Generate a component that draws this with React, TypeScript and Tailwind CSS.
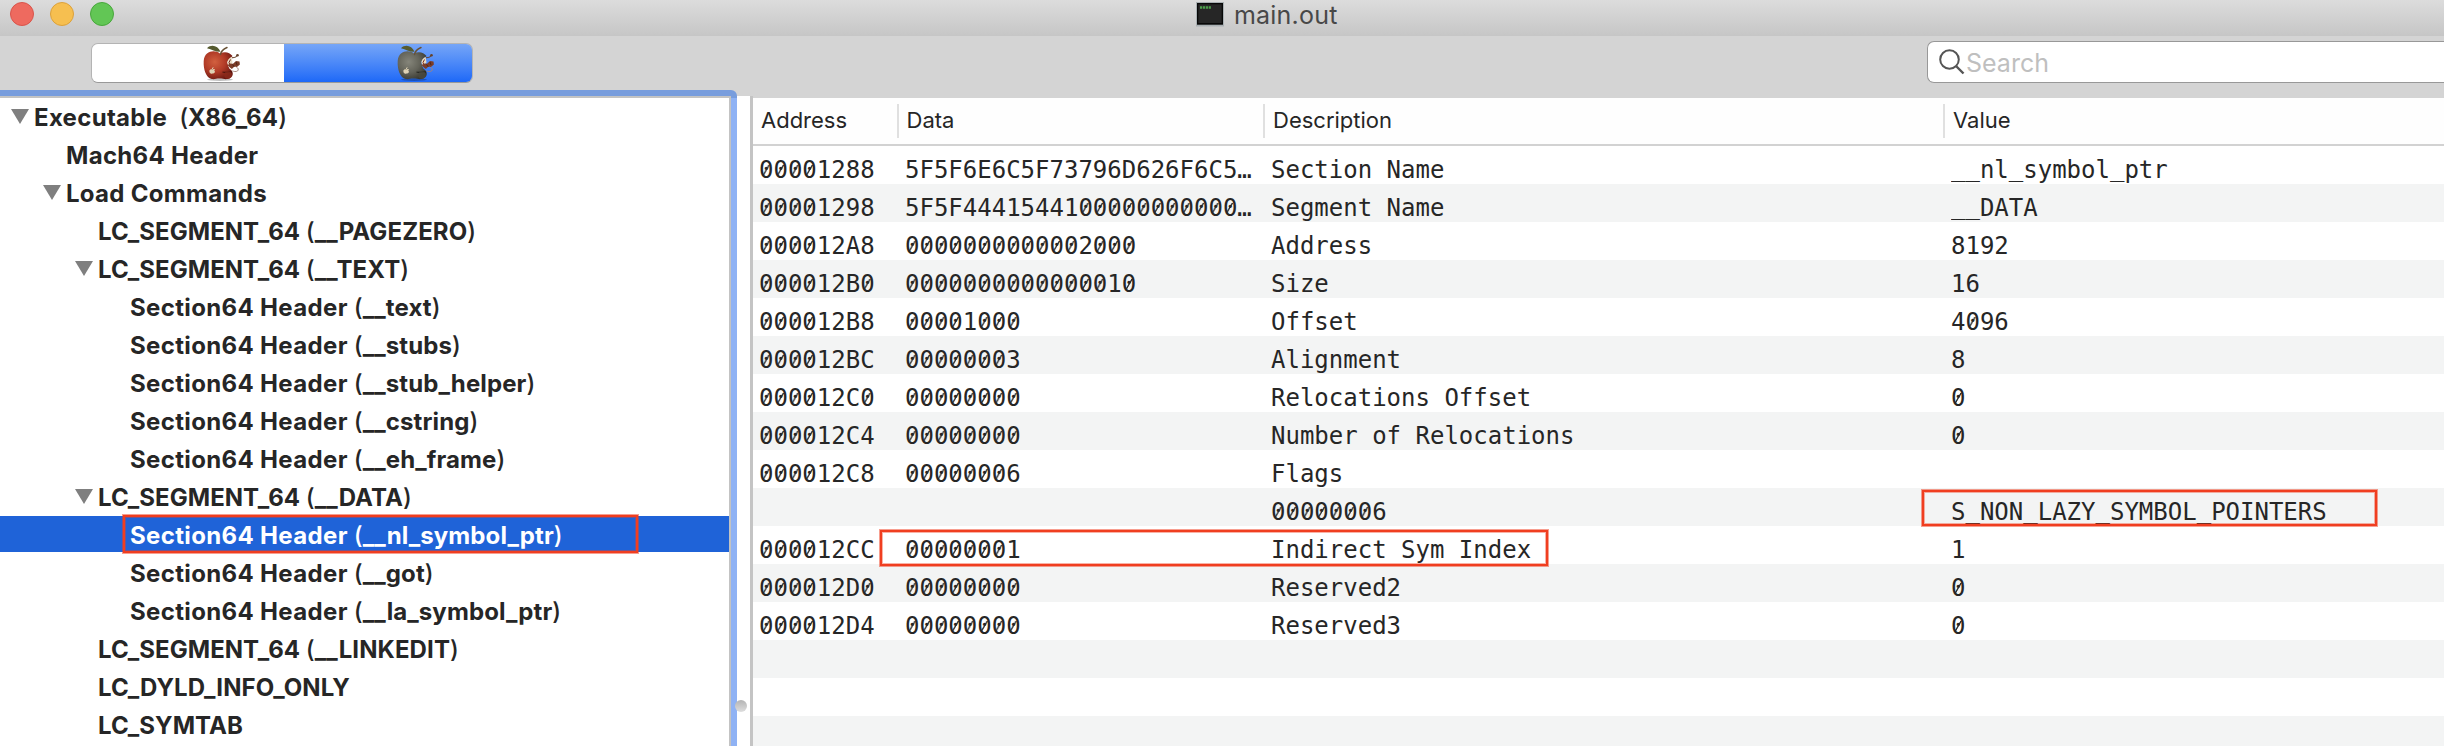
import React from 'react';

type Node = { level: number; label: string; arg?: string; open?: boolean; selected?: boolean };

const tree: Node[] = [
  { level: 0, label: 'Executable  ', arg: 'X86_64', open: true },
  { level: 1, label: 'Mach64 Header' },
  { level: 1, label: 'Load Commands', open: true },
  { level: 2, label: 'LC_SEGMENT_64 ', arg: '__PAGEZERO' },
  { level: 2, label: 'LC_SEGMENT_64 ', arg: '__TEXT', open: true },
  { level: 3, label: 'Section64 Header ', arg: '__text' },
  { level: 3, label: 'Section64 Header ', arg: '__stubs' },
  { level: 3, label: 'Section64 Header ', arg: '__stub_helper' },
  { level: 3, label: 'Section64 Header ', arg: '__cstring' },
  { level: 3, label: 'Section64 Header ', arg: '__eh_frame' },
  { level: 2, label: 'LC_SEGMENT_64 ', arg: '__DATA', open: true },
  { level: 3, label: 'Section64 Header ', arg: '__nl_symbol_ptr', selected: true },
  { level: 3, label: 'Section64 Header ', arg: '__got' },
  { level: 3, label: 'Section64 Header ', arg: '__la_symbol_ptr' },
  { level: 2, label: 'LC_SEGMENT_64 ', arg: '__LINKEDIT' },
  { level: 2, label: 'LC_DYLD_INFO_ONLY' },
  { level: 2, label: 'LC_SYMTAB' },
];

const rows = [
  ['00001288', '5F5F6E6C5F73796D626F6C5…', 'Section Name', '__nl_symbol_ptr'],
  ['00001298', '5F5F4441544100000000000…', 'Segment Name', '__DATA'],
  ['000012A8', '0000000000002000', 'Address', '8192'],
  ['000012B0', '0000000000000010', 'Size', '16'],
  ['000012B8', '00001000', 'Offset', '4096'],
  ['000012BC', '00000003', 'Alignment', '8'],
  ['000012C0', '00000000', 'Relocations Offset', '0'],
  ['000012C4', '00000000', 'Number of Relocations', '0'],
  ['000012C8', '00000006', 'Flags', ''],
  ['', '', '00000006', 'S_NON_LAZY_SYMBOL_POINTERS'],
  ['000012CC', '00000001', 'Indirect Sym Index', '1'],
  ['000012D0', '00000000', 'Reserved2', '0'],
  ['000012D4', '00000000', 'Reserved3', '0'],
  ['', '', '', ''],
  ['', '', '', ''],
  ['', '', '', ''],
];

const indent = ['pl-[11px]', 'pl-[43px]', 'pl-[75px]', 'pl-[107px]'];
const tracking = ['tracking-[0.3px]', 'tracking-[0.3px]', 'tracking-[0.05px]', 'tracking-[0.35px]'];

const mark =
  'pointer-events-none absolute z-10 border-2 border-[#f03e20] shadow-[0_0_0_1px_rgba(240,62,32,0.5),inset_0_0_0_1px_rgba(240,62,32,0.4)]';

// A diagonal stroke repeated once per digit, so that zeros read as slashed.
const slash =
  'bg-[linear-gradient(120deg,transparent_calc(50%-1.1px),#333_calc(50%-0.3px),#333_calc(50%+0.3px),transparent_calc(50%+1.1px))] bg-[length:14.448px_10px] bg-[position:0_9px] bg-repeat-x';

function Apple({ gray = false }: { gray?: boolean }) {
  const id = gray ? 'skin-gray' : 'skin-red';
  return (
    <svg width="38" height="37" viewBox="0 0 38 37">
      <defs>
        <radialGradient id={id} cx="0.38" cy="0.38" r="0.68">
          <stop offset="0" stopColor={gray ? '#85857a' : '#d2603f'} />
          <stop offset="0.55" stopColor={gray ? '#64645a' : '#b03a26'} />
          <stop offset="1" stopColor={gray ? '#3a3a32' : '#6b1a12'} />
        </radialGradient>
      </defs>
      <ellipse cx="17" cy="34.6" rx="13" ry="1.3" fill="#000" opacity="0.25" />
      <path
        d="M17 8.500C12 4.500 1.500 5.500.7 16c-.5 8.500 2.500 17 8 18 3 .5 5-.6 8-.5 3 .1 5 1 8 .5 3.500-.6 5.500-3.200 5-6-.3-2-1.700-3.500-3-4l-1.500-3-1-4 3.500-4 1.800-2c-3-4-8-5-12.500-2.500z"
        fill={`url(#${id})`}
      />
      <path d="M28.500 12c-3 1.200-4.600 4-3.800 6.500l1.300 2.500 3.500-3.500z" fill="#e9dcc4" />
      <path d="M27.500 14.500l-1.500 3 .8 2" stroke="#7a3020" strokeWidth="1" fill="none" />
      <path d="M24.500 20l3-1.500 2.500.2 3-2.700 3.500.4.4 3-3 2.500-2.500-.3-2.500 2.500-2-1.700z" fill="#7c3d28" />
      <path d="M29.500 19.500l2 2.500M33 17l1 3" stroke="#4c2417" strokeWidth="0.900" />
      <path d="M19.500 27c4 1 6.500-.8 9.500.3" fill="none" stroke={gray ? '#23231d' : '#49150f'} strokeWidth="1.200" />
      <circle cx="25" cy="30" r="3.800" fill={gray ? '#4b4b42' : '#8e2c1d'} opacity="0.700" />
      <path d="M33.500 22.500c2 .2 2.300 2.500 1 3.500-1.500.9-4 .6-5-.2" fill="none" stroke="#a58478" strokeWidth="0.900" />
      <path d="M29 12.700c2.500.3 4-.3 5.500-2.200" fill="none" stroke="#66432c" strokeWidth="1.200" />
      <circle cx="34.500" cy="10.300" r="1.300" fill="#66432c" />
      <path d="M17.500 9.500c.5-3.500 3-5.500 6.500-7" fill="none" stroke="#695236" strokeWidth="1.500" strokeLinecap="round" />
      <path d="M4 3.200C8-1 15 .3 17.500 6.800 12.500 7 9 4.500 4 3.200z" fill="#565b30" />
      <path
        d="M9.300 24.600c-1.600-1-3.100 0-2.900 1.900.2 1.700 1.500 2.600 2.900 1.900 1.400.7 2.500-.5 2.700-1.800-.9-.4-.9-1.600 0-2-.8-.8-1.700-.6-2.700 0z"
        fill="#dfd2b4"
      />
      <path d="M9.300 24l.9-1.700" stroke="#dfd2b4" strokeWidth="1" />
    </svg>
  );
}

function Cell({ text, className }: { text: string; className: string }) {
  return (
    <span
      className={`h-[38px] shrink-0 overflow-hidden pt-[10px] font-['DejaVu_Sans_Mono',monospace] text-[24px] leading-[28px] whitespace-pre ${className}`}
    >
      {text.split(/(0+|_+)/).map((part, i) =>
        part[0] === '0' ? (
          <span key={i} className={slash}>{part}</span>
        ) : part[0] === '_' ? (
          <span key={i} className="align-[2px] leading-none">{part}</span>
        ) : (
          part
        ),
      )}
    </span>
  );
}

export default function App() {
  return (
    <div className="relative flex h-[746px] w-[2444px] flex-col overflow-hidden bg-white font-['Inter',sans-serif] text-[#262626]">
      <header className="flex h-9 shrink-0 bg-linear-to-b from-[#dcdcdc] to-[#c6c6c6]">
        <div className="flex w-[1196px] gap-4 pt-[2px] pl-[10px]">
          <span className="size-6 rounded-full border border-[#d9544b] bg-[#ee6a5f]" />
          <span className="size-6 rounded-full border border-[#dca13b] bg-[#f6bf50]" />
          <span className="size-6 rounded-full border border-[#48a73c] bg-[#62c655]" />
        </div>
        <div className="flex h-[30px]">
          <svg width="28" height="27" viewBox="0 0 28 27">
            <rect x="0" y="2" width="28" height="24.500" fill="#a9b0b3" />
            <rect x="1" y="3" width="26" height="21.700" fill="#080808" />
            <rect x="2.300" y="4.300" width="23.400" height="18.700" fill="#262626" />
            <path d="M4 7.500h11" stroke="#4da14c" strokeWidth="2.400" strokeDasharray="2.200 .7" />
          </svg>
          <span className="ml-[10px] text-[25px] leading-[31px] tracking-[0.2px] text-[#484848]">main.out</span>
        </div>
      </header>

      <div className="flex h-[54px] shrink-0 items-start justify-between bg-[#d4d4d4]">
        <div className="mt-[7px] ml-[91px] flex h-10 w-[382px] overflow-hidden rounded-[7px] border border-[#b4b4b4] border-b-[#999]">
          <div className="flex w-[192px] bg-white pt-[1px] pl-[111px]">
            <Apple />
          </div>
          <div className="flex flex-1 bg-linear-to-b from-[#75a5f7] to-[#1d68f7] pt-[1px] pl-[113px]">
            <Apple gray />
          </div>
        </div>
        <div className="mt-[5px] flex h-[42px] w-[517px] items-center rounded-l-[7px] border border-r-0 border-[#989898] bg-white pl-[11px]">
          <svg width="26" height="26" viewBox="0 0 26 26" fill="none" stroke="#555" strokeWidth="2">
            <circle cx="10.500" cy="10.500" r="9.300" />
            <path d="M17 17l7.500 7.500" strokeWidth="2.400" />
          </svg>
          <span className="ml-[1px] pt-[2px] text-[25px] leading-[30px] text-[#bfbfbf]">Search</span>
        </div>
      </div>

      <main className="flex min-h-0 flex-1">
        <div className="flex w-[750px] shrink-0 bg-linear-to-b from-[#d4d4d4] from-[6px] to-white to-[6px]">
          <aside className="w-[737px] shrink-0 rounded-tr-[6px] bg-linear-to-b from-[#789ddd] from-[8px] to-[#8fb2f4] to-[8px] pt-[6px] pr-[6px]">
            <div className="flex h-full flex-col overflow-hidden border-t-2 border-r-2 border-[#c3c3c3] bg-white">
              {tree.map((n) => (
                <div key={n.label + n.arg} className="h-[38px] shrink-0">
                  <div className={`flex h-9 ${indent[n.level]} ${n.selected ? 'bg-[#1f63d8] text-white' : ''}`}>
                    <span className="w-[23px] shrink-0 pt-[11px]">
                      {n.open && (
                        <svg width="18" height="15" viewBox="0 0 18 15">
                          <path d="M0 0h18L9 15z" fill="#7f7f7f" />
                        </svg>
                      )}
                    </span>
                    <span className={`pt-[5px] text-[24px] leading-[30px] font-bold whitespace-pre ${tracking[n.level]}`}>
                      {n.label}
                      {n.arg && (
                        <span className="tracking-[0.1px]">
                          <span className="font-medium">(</span>
                          {n.arg}
                          <span className="font-medium">)</span>
                        </span>
                      )}
                    </span>
                  </div>
                </div>
              ))}
            </div>
          </aside>
        </div>

        <section className="flex min-w-0 flex-1 flex-col overflow-hidden">
          <div className="h-[6px] shrink-0 bg-[#d4d4d4]" />
          <div className="flex min-h-0 flex-1 flex-col border-l-[3px] border-[#c4c4c4]">
            <div className="h-[2px] shrink-0 bg-[#d4d4d4]" />
            <div className="flex h-12 shrink-0 border-b-2 border-[#d2d2d2] bg-[#fefefe] text-[22px] leading-[28px]">
              <div className="flex w-[146px] shrink-0 items-start justify-between py-[6px] pl-[8px]">
                <span className="pt-[2px]">Address</span>
                <i className="h-[34px] w-[2px] bg-[#e0e0e0]" />
              </div>
              <div className="flex w-[366px] shrink-0 items-start justify-between py-[6px] pl-[7.500px]">
                <span className="pt-[2px]">Data</span>
                <i className="h-[34px] w-[2px] bg-[#e0e0e0]" />
              </div>
              <div className="flex w-[680px] shrink-0 items-start justify-between py-[6px] pl-[8px]">
                <span className="pt-[2px]">Description</span>
                <i className="h-[34px] w-[2px] bg-[#e0e0e0]" />
              </div>
              <div className="flex items-start py-[6px] pl-[8px]">
                <span className="pt-[2px]">Value</span>
              </div>
            </div>
            {rows.map((r, i) => (
              <div key={i} className={`flex h-[38px] shrink-0 pl-[6px] ${i % 2 ? 'bg-[#f3f4f4]' : 'bg-white'}`}>
                <Cell text={r[0]} className="w-[146px]" />
                <Cell text={r[1]} className="w-[366px]" />
                <Cell text={r[2]} className="w-[680px]" />
                <Cell text={r[3]} className="w-[480px]" />
              </div>
            ))}
          </div>
        </section>
      </main>

      <span className="absolute top-[700px] left-[735px] size-3 rounded-full bg-linear-to-b from-[#b4b4b4] to-[#dedede]" />
      <div className={`${mark} top-[515px] left-[123px] h-[38px] w-[515px]`} />
      <div className={`${mark} top-[530px] left-[880px] h-[36px] w-[668px]`} />
      <div className={`${mark} top-[490px] left-[1922px] h-[36px] w-[455px]`} />
    </div>
  );
}
